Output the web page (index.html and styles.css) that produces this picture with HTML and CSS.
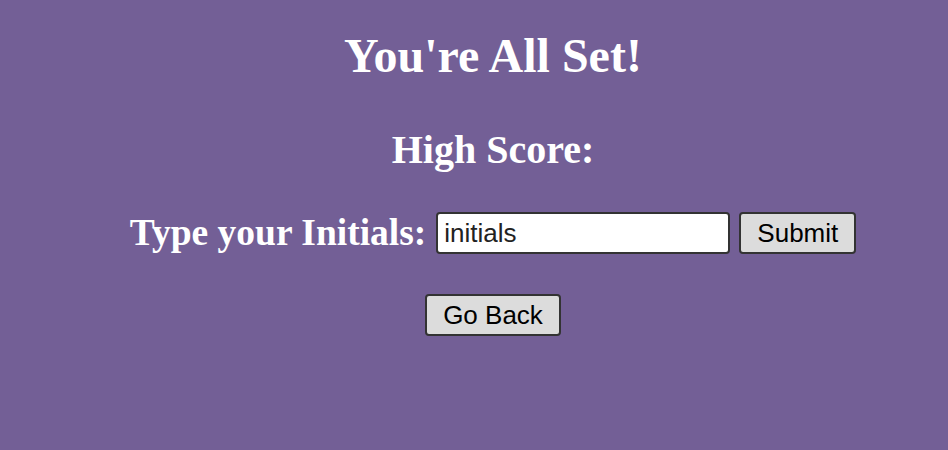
FILE: index.html
```html
<!DOCTYPE html>
<html>
<head>
<meta charset="utf-8">
<link rel="stylesheet" href="styles.css">
</head>
<body>
<div class="page">
  <h1 class="title">You're All Set!</h1>
  <h2 class="score">High Score:</h2>
  <form class="form">
    <label class="label" for="initials">Type your Initials:</label>
    <input class="input" id="initials" type="text" value="initials">
    <button class="btn btn-submit" type="button">Submit</button>
  </form>
  <div class="back-row">
    <button class="btn" type="button">Go Back</button>
  </div>
</div>
</body>
</html>
```
FILE: styles.css
```css
html, body {
  margin: 0;
  padding: 0;
  background: #735f96;
  height: 100%;
}
.page {
  display: flex;
  flex-direction: column;
  align-items: center;
  font-family: "Liberation Serif", "Times New Roman", serif;
  color: #ffffff;
  padding-top: 28px;
  padding-left: 38px;
}
.title {
  font-size: 48px;
  font-weight: bold;
  margin: 0;
  line-height: 56px;
}
.score {
  font-size: 40px;
  font-weight: bold;
  margin: 0;
  margin-top: 42px;
  line-height: 48px;
}
.form {
  display: flex;
  align-items: center;
  margin-top: 38px;
}
.label {
  font-size: 37.5px;
  font-weight: bold;
  line-height: 42px;
  margin-right: 10px;
}
.input {
  width: 294px;
  height: 42px;
  box-sizing: border-box;
  font-family: "Liberation Sans", Arial, sans-serif;
  font-size: 26px;
  color: #222;
  border: 2px solid #333;
  border-radius: 4px;
  padding: 0 6px;
  background: #fff;
  margin: 0;
}
.btn {
  height: 42px;
  box-sizing: border-box;
  font-family: "Liberation Sans", Arial, sans-serif;
  font-size: 26px;
  color: #000;
  background: #dcdcdc;
  border: 2px solid #333;
  border-radius: 4px;
  padding: 0 16px;
  margin: 0;
}
.btn-submit {
  margin-left: 9px;
}
.back-row {
  margin-top: 40px;
}
```
